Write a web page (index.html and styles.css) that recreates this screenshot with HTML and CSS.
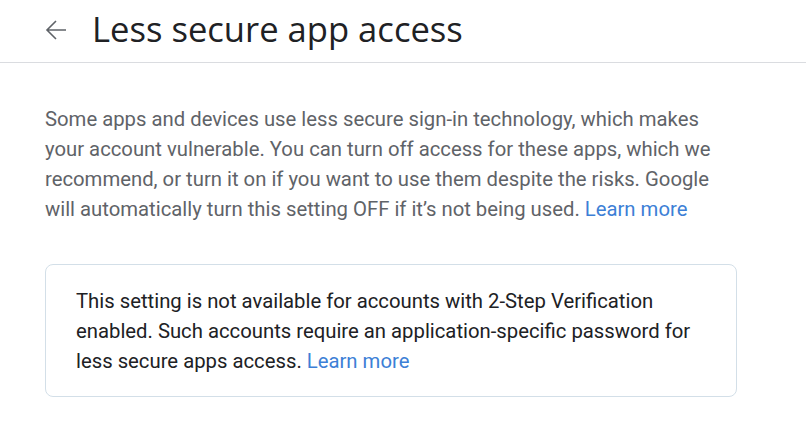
FILE: index.html
```html
<!DOCTYPE html>
<html lang="en">
<head>
<meta charset="utf-8">
<title>Less secure app access</title>
<link rel="stylesheet" href="styles.css">
</head>
<body>
<header class="header">
  <a class="back" href="#" aria-label="Back">
    <svg width="24" height="24" viewBox="0 0 24 24"><path d="M22 12H3M12 3L3 12l9 9" fill="none" stroke="#5f6368" stroke-width="1.6"/></svg>
  </a>
  <h1 class="title">Less secure app access</h1>
</header>
<main class="main">
  <p class="intro">Some apps and devices use less secure sign-in technology, which makes your account vulnerable. You can turn off access for these apps, which we recommend, or turn it on if you want to use them despite the risks. Google will automatically turn this setting OFF if it’s not being used. <a class="link" href="#">Learn more</a></p>
  <div class="notice">
    <p>This setting is not available for accounts with 2-Step Verification enabled. Such accounts require an application-specific password for less secure apps access. <a class="link" href="#">Learn more</a></p>
  </div>
</main>
</body>
</html>
```
FILE: styles.css
```css
html, body { margin: 0; padding: 0; background: #fff; }
body { font-family: Roboto, "Noto Sans", sans-serif; }
.header {
  height: 63px;
  border-bottom: 1px solid #dadce0;
  display: flex;
  align-items: center;
  padding-left: 44px;
  box-sizing: border-box;
}
.back { display: flex; width: 24px; height: 24px; margin-right: 24px; margin-top: -2px; }
.title {
  margin: 0;
  font-family: "Open Sans", sans-serif;
  font-weight: 400;
  font-size: 34.6px;
  color: #202124;
  margin-top: -6px;
}
.main { width: 692px; padding: 41px 0 0 45px; }
.intro {
  margin: 0;
  max-width: 706px;
  font-size: 20.3px;
  line-height: 30px;
  color: #5f6368;
}
.link { color: #3d7fd6; text-decoration: none; }
.notice {
  margin-top: 40px;
  border: 1px solid #d3dfe8;
  border-radius: 8px;
  padding: 21px 30px 20px 30px;
}
.notice p {
  margin: 0;
  font-size: 20.3px;
  line-height: 30px;
  color: #202124;
}
```
